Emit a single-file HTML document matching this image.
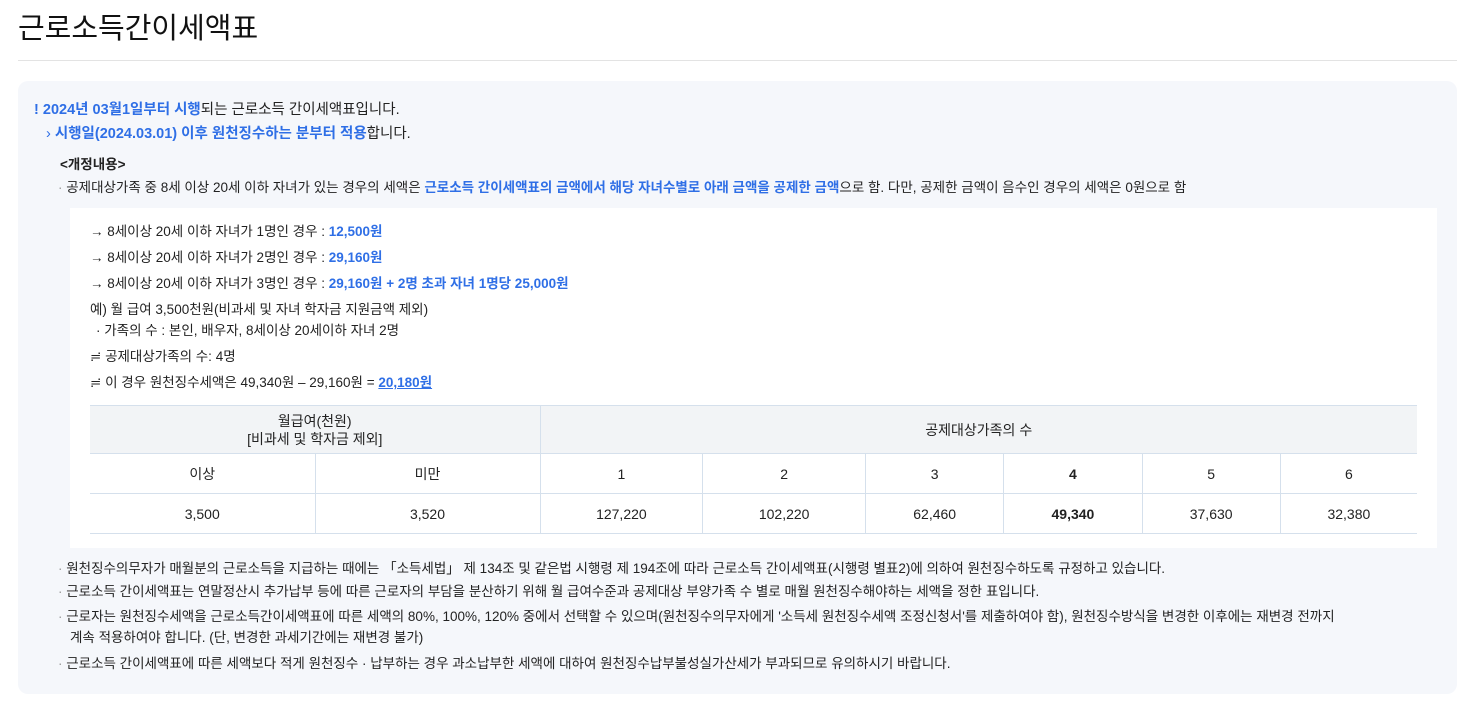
<!DOCTYPE html>
<html><head><meta charset="utf-8"><style>
*{margin:0;padding:0;box-sizing:border-box}
body{width:1465px;height:711px;background:#fff;font-family:"Liberation Sans","Noto Sans CJK KR",sans-serif;color:#222;font-size:14px;position:relative;overflow:hidden}
.a{position:absolute;white-space:nowrap;line-height:20px}
.b{color:#2f6fe6;font-weight:bold}
h1{position:absolute;left:18px;top:6px;font-size:29px;font-weight:normal;color:#111;line-height:40px;font-family:"Noto Sans CJK KR",sans-serif}
.hr{position:absolute;left:18px;top:60px;width:1439px;height:1px;background:#e3e3e3}
.box{position:absolute;left:18px;top:81px;width:1439px;height:613px;background:#f5f7fb;border-radius:10px}
.wb{position:absolute;left:70px;top:208px;width:1367px;height:340px;background:#fff}
table{position:absolute;left:90px;top:405px;width:1327px;border-collapse:collapse;border-top:1px solid #4a7d8c;font-size:14px}
td{border:1px solid #d5e0ec;text-align:center;color:#222;line-height:18px}
tr td:first-child{border-left:none}tr td:last-child{border-right:none}
.h td{background:#f2f4f6;height:48px}
.r td{height:40px}
.dot{color:#999}
</style></head><body>
<h1>근로소득간이세액표</h1>
<div class="hr"></div>
<div class="box"></div>
<div class="a" style="left:34px;top:100px;font-size:14.5px"><span class="b" style="color:#2f6fe6">!</span> <span class="b">2024년 03월1일부터 시행</span>되는 근로소득 간이세액표입니다.</div>
<div class="a" style="left:46px;top:124px;font-size:14.5px"><span style="color:#2f6fe6">›</span> <span class="b">시행일(2024.03.01) 이후 원천징수하는 분부터 적용</span>합니다.</div>
<div class="a" style="left:60px;top:155px;font-weight:bold;font-size:13.5px">&lt;개정내용&gt;</div>
<div class="a" style="left:58px;top:178px;font-size:13.5px"><span class="dot">·</span> 공제대상가족 중 8세 이상 20세 이하 자녀가 있는 경우의 세액은 <span class="b">근로소득 간이세액표의 금액에서 해당 자녀수별로 아래 금액을 공제한 금액</span>으로 함. 다만, 공제한 금액이 음수인 경우의 세액은 0원으로 함</div>
<div class="wb"></div>
<div class="a" style="left:90px;top:222px;font-size:13.5px">→ 8세이상 20세 이하 자녀가 1명인 경우 : <span class="b">12,500원</span></div>
<div class="a" style="left:90px;top:248px;font-size:13.5px">→ 8세이상 20세 이하 자녀가 2명인 경우 : <span class="b">29,160원</span></div>
<div class="a" style="left:90px;top:274px;font-size:13.5px">→ 8세이상 20세 이하 자녀가 3명인 경우 : <span class="b">29,160원 + 2명 초과 자녀 1명당 25,000원</span></div>
<div class="a" style="left:90px;top:300px;font-size:13.5px">예) 월 급여 3,500천원(비과세 및 자녀 학자금 지원금액 제외)</div>
<div class="a" style="left:96px;top:321px;font-size:13.5px">· 가족의 수 : 본인, 배우자, 8세이상 20세이하 자녀 2명</div>
<div class="a" style="left:90px;top:347px;font-size:13.5px">≓ 공제대상가족의 수: 4명</div>
<div class="a" style="left:90px;top:373px;font-size:13.5px">≓ 이 경우 원천징수세액은 49,340원 – 29,160원 = <span class="b" style="text-decoration:underline">20,180원</span></div>
<table>
<tr class="h"><td colspan="2" style="width:450px">월급여(천원)<br>[비과세 및 학자금 제외]</td><td colspan="6">공제대상가족의 수</td></tr>
<tr class="r"><td style="width:225px">이상</td><td style="width:225px">미만</td><td>1</td><td>2</td><td>3</td><td><b>4</b></td><td>5</td><td>6</td></tr>
<tr class="r"><td>3,500</td><td>3,520</td><td>127,220</td><td>102,220</td><td>62,460</td><td><b>49,340</b></td><td>37,630</td><td>32,380</td></tr>
</table>
<div class="a" style="left:58px;top:559px;font-size:13.5px"><span class="dot">·</span> 원천징수의무자가 매월분의 근로소득을 지급하는 때에는 「소득세법」 제 134조 및 같은법 시행령 제 194조에 따라 근로소득 간이세액표(시행령 별표2)에 의하여 원천징수하도록 규정하고 있습니다.</div>
<div class="a" style="left:58px;top:582px;font-size:13.5px"><span class="dot">·</span> 근로소득 간이세액표는 연말정산시 추가납부 등에 따른 근로자의 부담을 분산하기 위해 월 급여수준과 공제대상 부양가족 수 별로 매월 원천징수해야하는 세액을 정한 표입니다.</div>
<div class="a" style="left:58px;top:607px;font-size:13.5px"><span class="dot">·</span> 근로자는 원천징수세액을 근로소득간이세액표에 따른 세액의 80%, 100%, 120% 중에서 선택할 수 있으며(원천징수의무자에게 '소득세 원천징수세액 조정신청서'를 제출하여야 함), 원천징수방식을 변경한 이후에는 재변경 전까지</div>
<div class="a" style="left:70px;top:628px;font-size:13.5px">계속 적용하여야 합니다. (단, 변경한 과세기간에는 재변경 불가)</div>
<div class="a" style="left:58px;top:654px;font-size:13.5px"><span class="dot">·</span> 근로소득 간이세액표에 따른 세액보다 적게 원천징수 · 납부하는 경우 과소납부한 세액에 대하여 원천징수납부불성실가산세가 부과되므로 유의하시기 바랍니다.</div>
</body></html>
